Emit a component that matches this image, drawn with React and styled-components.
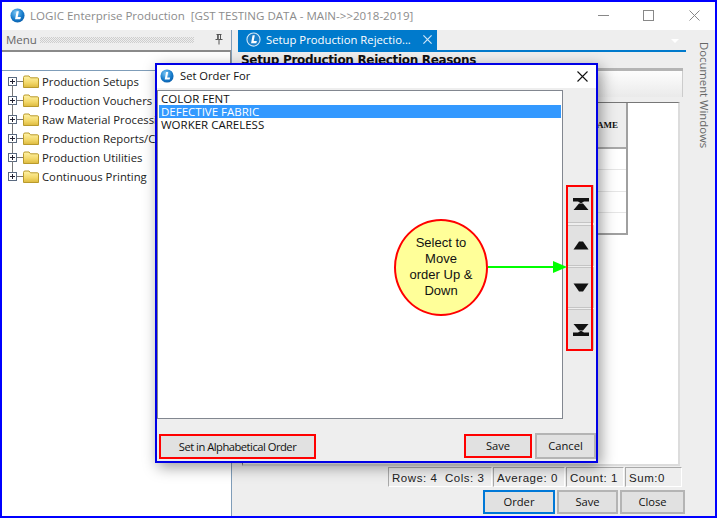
import React from 'react';
import styled, { createGlobalStyle } from 'styled-components';

const Global = createGlobalStyle`
  html, body { margin: 0; padding: 0; background: #fff; }
  * { box-sizing: border-box; }
`;
const UI = `"Open Sans", "Noto Sans", sans-serif`;

const Frame = styled.div`
  position: relative; width: 717px; height: 518px; border: 2px solid #0000ff; background: #eeeeee;
  display: flex; flex-direction: column; overflow: hidden; font-family: ${UI}; color: #111;
`;
const TitleBar = styled.div`
  height: 28px; background: #fff; display: flex; align-items: center; padding: 0 0 2px 8px; margin-right: -2px; flex: none;
`;
const AppTitle = styled.span`
  margin-left: 5px; font-size: 11.55px; color: #8c8c8c; white-space: pre; flex: 1;
`;
const WinBtn = styled.span`
  width: 45.5px; display: flex; justify-content: center; align-items: center;
`;
const Body = styled.div`display: flex; flex: 1; min-height: 0;`;
const Left = styled.aside`
  width: 230px; flex: none; display: flex; flex-direction: column; border-right: 1px solid #7f9db9;
`;
const MenuHead = styled.div`
  height: 22px; flex: none; display: flex; align-items: center; gap: 3px; padding: 0 8px 1px 4px; font-size: 11.5px;
  color: #666; border-bottom: 2px solid #8a8a8a;
`;
const Grip = styled.div`
  width: 154px; height: 6px; flex: none;
  background: conic-gradient(#cdcdcd 25%, transparent 0 50%, #cdcdcd 0 75%, transparent 0) 0 0 / 2px 2px;
`;
const PinBox = styled.span`margin-left: auto; display: flex;`;
const SearchBand = styled.div`
  height: 19px; flex: none; background: #fff; border-right: 1px solid #8a8a8a; border-bottom: 1px solid #7f9db9;
`;
const Tree = styled.div`flex: 1; background: #fff; padding: 1px 0 0 6px;`;
const TreeRow = styled.div`
  position: relative; height: 19px; display: flex; align-items: center; font-size: 11.3px; white-space: nowrap; color: #222;
`;
const TreeText = styled.span`margin-left: 3px;`;
const Connector = styled.span`
  position: absolute; left: 4px; top: 13px; width: 1px; height: 11px; background: #777;
`;

const Main = styled.main`flex: 1; min-width: 0; display: flex; padding-left: 6px;`;
const Content = styled.div`width: 448px; flex: none; display: flex; flex-direction: column;`;
const TabStrip = styled.div`height: 22px; flex: none; border-bottom: 2px solid #007acc; position: relative;`;
const Tab = styled.div`
  width: 199px; height: 20px; background: #007acc; color: #fff; font-size: 11.3px; display: flex; align-items: center;
  padding: 0 0 2px 8px; gap: 5px; white-space: nowrap;
`;
const TabClose = styled.span`margin-left: auto; margin-right: 5px; display: flex;`;
const StripArrow = styled.span`
  position: absolute; right: 7px; top: 9px; width: 0; height: 0; border: 4px solid transparent; border-top-color: #fff; border-bottom: 0;
`;
const Doc = styled.div`flex: 1; min-height: 0; display: flex; flex-direction: column; padding: 0 3px 0 3px;`;
const DocTitle = styled.div`
  height: 16px; flex: none; font: bold 12px/16px "DejaVu Sans", sans-serif; color: #111; white-space: nowrap; letter-spacing: -0.32px;
`;
const GrayBar = styled.div`height: 3px; flex: none; background: #b4b4b4;`;
const Toolbar = styled.div`
  height: 26px; flex: none; margin-left: 1px; background: linear-gradient(#fdfdfd, #eaeaea); border-right: 1px solid #ccc;
`;
const Panel = styled.div`
  margin: 5px 3px 0 1px; height: 364px; flex: none; background: #fff; border-right: 2px solid #dcdcdc; border-bottom: 2px solid #dcdcdc;
  border-left: 1px solid #777; border-top: 1px solid #777;
`;
const Grid = styled.div`
  width: 385px; height: 132px; display: flex; flex-direction: column; border-right: 2px solid #a0a0a0; border-bottom: 2px solid #a0a0a0;
`;
const GridHead = styled.div`
  height: 46px; flex: none; background: #eeeeee; border-bottom: 2px solid #a8a8a8; display: flex; align-items: center; justify-content: flex-end;
  padding-right: 8px; font: bold 9px "Liberation Serif", serif; color: #111;
`;
const GridRow = styled.div`flex: 1; border-bottom: 1px solid #e6e6e6; &:last-child { border-bottom: 0; }`;
const Status = styled.div`
  height: 20px; flex: none; margin-top: 1px; display: flex; justify-content: flex-end; padding-right: 1px;
`;
const StatCell = styled.div`
  width: ${p => p.$w}px; height: 20px; border: 1px solid #fff; border-left-color: #a9a9a9; border-top-color: #a9a9a9; margin-left: 1px;
  font: 11.5px/20px "Liberation Sans", sans-serif; letter-spacing: 0.55px; padding-left: 3px; white-space: pre; color: #222;
`;
const Actions = styled.div`
  flex: none; display: flex; justify-content: flex-end; gap: 2px; margin: 3px -2px 0 0;
`;
const Btn = styled.button`
  width: ${p => p.$w}px; height: ${p => p.$h || 24}px; background: #e1e1e1; color: #111; padding: 0 0 1px; font-family: ${UI}; font-size: 11.2px;
  border: ${p => p.$bd || '2px solid #b4b4b4'}; letter-spacing: ${p => p.$ls || '0'}; flex: none;
  margin: ${p => p.$m || '0'};
`;
const Rail = styled.div`
  flex: 1; display: flex; justify-content: center; padding: 12px 0 0 8px;
`;
const RailText = styled.span`
  writing-mode: vertical-rl; font-size: 11.3px; color: #666; height: 110px; white-space: nowrap;
`;

const Dialog = styled.div`
  position: absolute; left: 153px; top: 61px; width: 443px; height: 400px; border: 2px solid #0000e6; background: #eeeeee;
  display: flex; flex-direction: column; box-shadow: 3px 4px 14px rgba(0,0,0,.4);
`;
const DlgTitle = styled.div`
  height: 23px; flex: none; background: #fff; display: flex; align-items: center; padding: 0 8px 2px 3px; font-size: 11.2px; gap: 6px; color: #111;
`;
const DlgClose = styled.span`margin-left: auto; margin-top: 2px; display: flex;`;
const DlgMid = styled.div`flex: 1; min-height: 0; display: flex; margin-top: 2px;`;
const List = styled.div`
  width: 406px; flex: none; background: #fff; border: 1px solid #828790; padding: 1px 1px;
  font-family: ${UI}; font-size: 11.5px; line-height: 13px; color: #111;
`;
const ListItem = styled.div`
  height: 13px; padding-left: 2px; white-space: nowrap; background: ${p => p.$sel ? '#3399ff' : 'transparent'}; color: ${p => p.$sel ? '#fff' : '#111'};
`;
const Side = styled.div`
  flex: 1; display: flex; flex-direction: column; padding: 95px 0 0 4px;
`;
const MoveBtn = styled.button`
  width: 27px; height: ${p => p.$h}px; margin-bottom: ${p => p.$mb}px; background: #e1e1e1; border: 1px solid #c4c4c4; padding: 0;
  display: flex; align-items: center; justify-content: center; flex: none;
`;
const DlgFoot = styled.div`
  height: 42px; flex: none; display: flex; align-items: flex-start; padding: 15px 0 0 2px;
`;
const Spacer = styled.span`flex: 1;`;
const RedMark = styled.div`
  position: absolute; left: 564px; top: 183px; width: 27px; height: 166px; border: 2px solid #ff0000; pointer-events: none;
`;
const Bubble = styled.div`
  position: absolute; left: 392px; top: 217px; width: 94px; height: 97px; border-radius: 50%; background: #ffff99; border: 2px solid #ff0000;
  display: flex; align-items: center; justify-content: center; text-align: center; padding-bottom: 2px;
  font: 13px/16px "Liberation Sans", sans-serif; color: #111;
`;
const Arrow = styled.svg`position: absolute; left: 486px; top: 256px;`;

const Logo = ({ s = 15 }) => (
  <svg width={s} height={s} viewBox="0 0 16 16" style={{ flex: 'none' }}>
    <defs>
      <radialGradient id="lg" cx="40%" cy="30%" r="80%">
        <stop offset="0" stopColor="#7cc8f5" /><stop offset="0.6" stopColor="#1479c9" /><stop offset="1" stopColor="#0b5aa5" />
      </radialGradient>
    </defs>
    <circle cx="8" cy="8" r="7.5" fill="url(#lg)" />
    <path d="M7 3.5 L9.4 3.5 L8.2 9.6 L11.6 9.6 L11 12 L5.4 12 Z" fill="#fff" />
  </svg>
);
const TabLogo = () => (
  <svg width="15" height="15" viewBox="0 0 16 16" style={{ flex: 'none' }}>
    <circle cx="8" cy="8" r="7" fill="#1b7fc9" stroke="#cfe6f7" strokeWidth="1.2" />
    <path d="M7 3.5 L9.4 3.5 L8.2 9.6 L11.6 9.6 L11 12 L5.4 12 Z" fill="#fff" />
  </svg>
);
const X = ({ s = 11, c = '#111', w = 1 }) => (
  <svg width={s} height={s} viewBox="0 0 11 11"><path d="M0.5 0.5 L10.5 10.5 M10.5 0.5 L0.5 10.5" stroke={c} strokeWidth={w} fill="none" /></svg>
);
const Pin = () => (
  <svg width="8" height="11" viewBox="0 0 8 11"><path d="M1.5 .5h5M2.5 .5v5M5.5 .5v5M.5 5.5h7M4 5.5v5" stroke="#555" strokeWidth="1" fill="none" /><rect x="2.5" y="1" width="1.5" height="4.5" fill="#777" /></svg>
);
const Expander = () => (
  <svg width="15" height="9" viewBox="0 0 15 9" style={{ flex: 'none' }}>
    <rect x=".5" y=".5" width="8" height="8" fill="#fff" stroke="#5a6a80" />
    <path d="M2 4.5h5M4.5 2v5" stroke="#223" />
    <path d="M9 4.5h6" stroke="#777" />
  </svg>
);
const Folder = () => (
  <svg width="16" height="13" viewBox="0 0 16 13" style={{ flex: 'none' }}>
    <defs>
      <linearGradient id="fg" x1="0" y1="0" x2="0" y2="1">
        <stop offset="0" stopColor="#fff3a8" /><stop offset=".6" stopColor="#f2d768" /><stop offset="1" stopColor="#dcb93e" />
      </linearGradient>
    </defs>
    <path d="M.5 2.5 Q.5 1 2 1 H6 L7.5 2.8 H14.5 Q15.5 2.8 15.5 4 V12.5 H.5 Z" fill="url(#fg)" stroke="#b99a2c" />
  </svg>
);
const Top = () => <svg width="16" height="12" viewBox="0 0 16 12"><path d="M0 0h16v3.5H11L8.5 5h-1L5 3.5H0zM6 5.5h4L15.5 12H.5z" fill="#111" /></svg>;
const Bottom = () => <svg width="16" height="12" viewBox="0 0 16 12"><path d="M0 12h16V8.5H11L8.5 7h-1L5 8.5H0zM6 6.5h4L15.5 0H.5z" fill="#111" /></svg>;
const Up = () => <svg width="16" height="9" viewBox="0 0 16 9"><path d="M6 .5h4L15.5 8.5H.5z" fill="#111" /></svg>;
const Down = () => <svg width="16" height="9" viewBox="0 0 16 9"><path d="M6 8.5h4L15.5 .5H.5z" fill="#111" /></svg>;

const items = ['Production Setups', 'Production Vouchers', 'Raw Material Processing', 'Production Reports/Certificates', 'Production Utilities', 'Continuous Printing'];

export default function App() {
  return (
    <Frame>
      <Global />
      <TitleBar>
        <Logo />
        <AppTitle>LOGIC Enterprise Production  [GST TESTING DATA - MAIN-{'>>'}2018-2019]</AppTitle>
        <WinBtn><svg width="11" height="11"><path d="M0 5.5h11" stroke="#888" /></svg></WinBtn>
        <WinBtn><svg width="11" height="11"><rect x=".5" y=".5" width="10" height="10" fill="none" stroke="#888" /></svg></WinBtn>
        <WinBtn><X c="#888" /></WinBtn>
      </TitleBar>
      <Body>
        <Left>
          <MenuHead>Menu<Grip /><PinBox><Pin /></PinBox></MenuHead>
          <SearchBand />
          <Tree>
            {items.map((t, i) => (
              <TreeRow key={t}>
                <Expander /><Folder /><TreeText>{t}</TreeText>
                {i < items.length - 1 && <Connector />}
              </TreeRow>
            ))}
          </Tree>
        </Left>
        <Main>
          <Content>
            <TabStrip>
              <Tab><TabLogo />Setup Production Rejectio...<TabClose><X s={9} c="#cfe6f7" w={1.5} /></TabClose></Tab>
              <StripArrow />
            </TabStrip>
            <Doc>
              <DocTitle>Setup Production Rejection Reasons</DocTitle>
              <GrayBar />
              <Toolbar />
              <Panel>
                <Grid>
                  <GridHead>NAME</GridHead>
                  <GridRow /><GridRow /><GridRow /><GridRow />
                </Grid>
              </Panel>
              <Status>
                <StatCell $w={104}>Rows: 4  Cols: 3</StatCell>
                <StatCell $w={72}>Average: 0</StatCell>
                <StatCell $w={58}>Count: 1</StatCell>
                <StatCell $w={57}>Sum:0</StatCell>
              </Status>
              <Actions>
                <Btn $w={72} $bd="2px solid #0078d7">Order</Btn>
                <Btn $w={61}>Save</Btn>
                <Btn $w={65}>Close</Btn>
              </Actions>
            </Doc>
          </Content>
          <Rail><RailText>Document Windows</RailText></Rail>
        </Main>
      </Body>

      <Dialog>
        <DlgTitle><Logo s={14} />Set Order For<DlgClose><X s={11} w={1.1} /></DlgClose></DlgTitle>
        <DlgMid>
          <List>
            <ListItem>COLOR FENT</ListItem>
            <ListItem $sel>DEFECTIVE FABRIC</ListItem>
            <ListItem>WORKER CARELESS</ListItem>
          </List>
          <Side>
            <MoveBtn $h={38} $mb={2}><Top /></MoveBtn>
            <MoveBtn $h={41} $mb={1}><Up /></MoveBtn>
            <MoveBtn $h={41} $mb={1}><Down /></MoveBtn>
            <MoveBtn $h={41} $mb={0}><Bottom /></MoveBtn>
          </Side>
        </DlgMid>
        <DlgFoot>
          <Btn $w={157} $h={25} $bd="2px solid #ff0000" $ls="-0.5px">Set in Alphabetical Order</Btn>
          <Spacer />
          <Btn $w={68} $h={24} $bd="2px solid #ff0000">Save</Btn>
          <Btn $w={61} $h={26} $m="-1px 0 0 3px">Cancel</Btn>
        </DlgFoot>
      </Dialog>
      <RedMark />
      <Bubble>Select to<br />Move<br />order Up &amp;<br />Down</Bubble>
      <Arrow width="80" height="18" viewBox="0 0 80 18">
        <path d="M0 9H68" stroke="#00ff00" strokeWidth="2" />
        <path d="M65 3L79 9L65 15z" fill="#00ff00" />
      </Arrow>
    </Frame>
  );
}
